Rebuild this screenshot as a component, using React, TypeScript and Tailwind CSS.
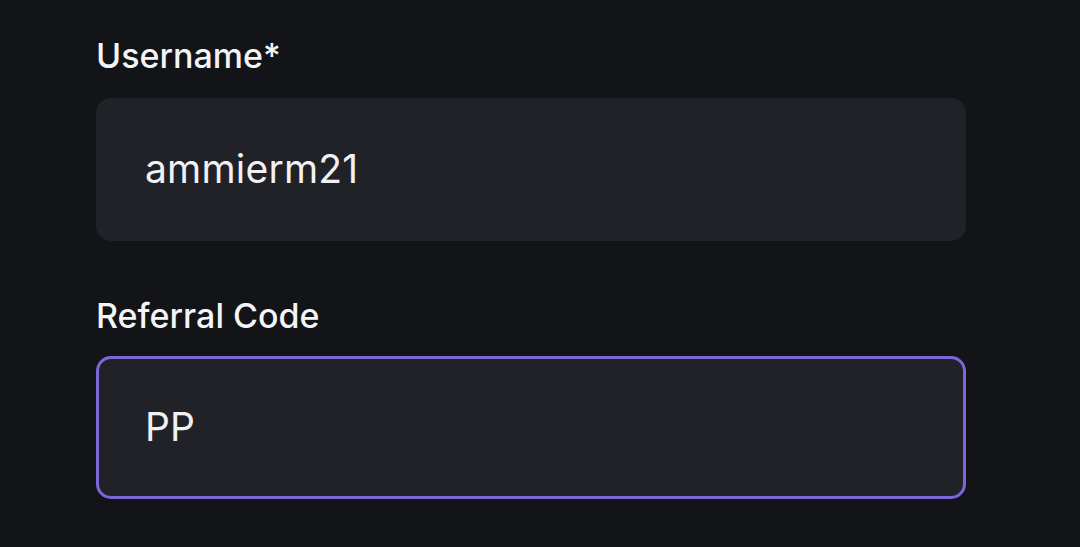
import React from 'react'

interface FieldProps {
    label: string
    value: string
    focused?: boolean
}

const Field: React.FC<FieldProps> = ({ label, value, focused }) => {
    return (
        <div className="flex flex-col">
            <label className="text-[34px] leading-[40px] font-medium text-[#f4f4f6]">{label}</label>
            <div
                className={
                    focused
                        ? 'mt-[20px] h-[143px] rounded-[15px] bg-[#202228] border-[3px] border-[#7c67d9] flex items-center px-[46px]'
                        : 'mt-[22px] h-[143px] rounded-[15px] bg-[#202228] border-[3px] border-transparent flex items-center px-[46px]'
                }
            >
                <span className="text-[39px] text-[#f1f1f3] tracking-[0.2px]">{value}</span>
            </div>
        </div>
    )
}

export default function App() {
    return (
        <div
            className="w-[1080px] h-[547px] bg-[#131418] overflow-hidden"
            style={{ fontFamily: 'Inter, "Noto Sans", sans-serif' }}
        >
            <div className="w-[870px] ml-[96px] pt-[36px] flex flex-col gap-[55px]">
                <Field label="Username*" value="ammierm21" />
                <Field label="Referral Code" value="PP" focused />
            </div>
        </div>
    )
}
